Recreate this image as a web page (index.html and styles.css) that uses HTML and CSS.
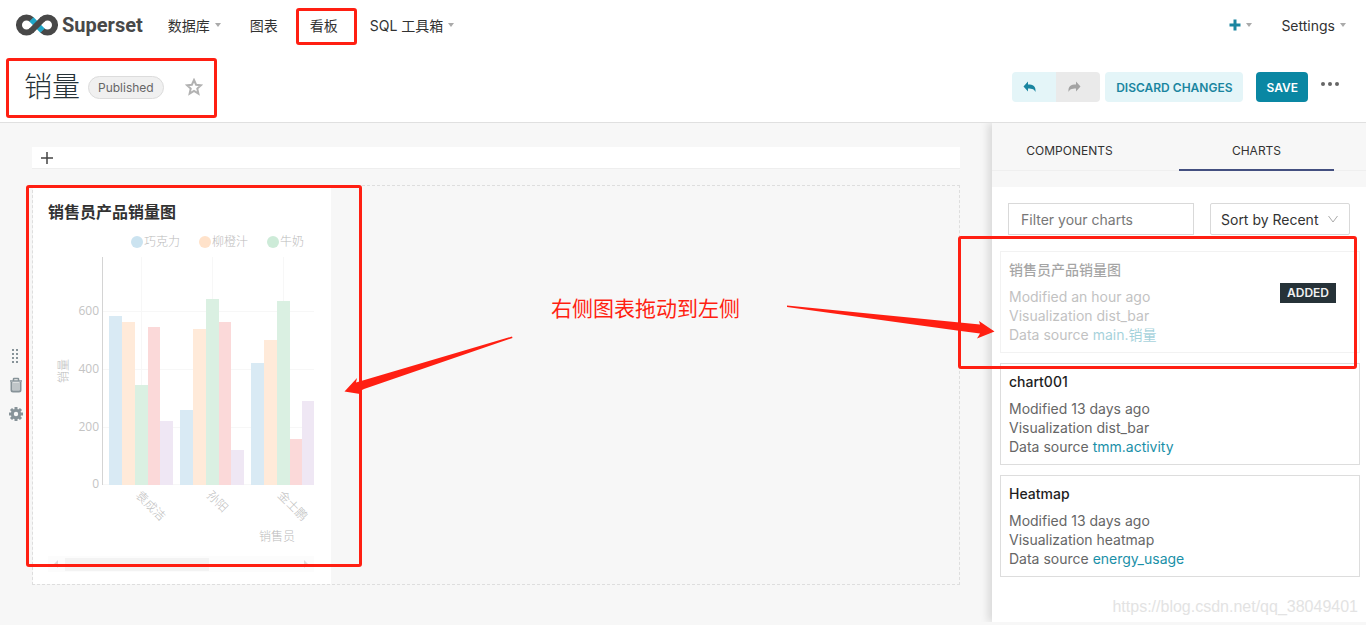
FILE: index.html
```
<!DOCTYPE html>
<html lang="zh">
  <head>
    <meta charset="utf-8">
    <meta name="viewport" content="width=device-width, initial-scale=1">
    <title>Superset</title>
    <link rel="stylesheet" href="styles.css">
  </head>
  <body>
    <nav class="navbar">
      <a class="brand" href="#">
        <svg width="42" height="22" viewBox="0 0 42 22" fill="none" stroke-width="6">
          <path d="M15.800 5.700a7.500 7.500 0 1 0 0 10.600M26.200 5.700a7.500 7.500 0 1 1 0 10.600" stroke="#484848"/>
          <path d="M15.500 5.400L26.500 16.600" stroke="#20a7c9"/>
          <path d="M15.200 16.800L26.800 5.200" stroke="#484848"/>
        </svg>
        <span>Superset</span>
      </a>
      <div class="menu">
        <a href="#">数据库<i class="caret"></i></a>
        <a href="#">图表</a>
        <a href="#">看板</a>
        <a href="#">SQL 工具箱<i class="caret"></i></a>
      </div>
      <div class="menu menu-right">
        <a href="#" aria-label="New">
          <svg width="12" height="12" viewBox="0 0 12 12"><path d="M6 0.500v11M0.500 6h11" stroke="#1a85a0" stroke-width="3"/></svg><i class="caret"></i>
        </a>
        <a href="#">Settings<i class="caret"></i></a>
      </div>
    </nav>

    <header class="dash-header">
      <h1>销量</h1>
      <span class="badge">Published</span>
      <button class="icon-btn" aria-label="Favorite">
        <svg width="18" height="18" viewBox="0 0 18 18"><path d="M9 2l2.100 4.700 5 .5-3.800 3.400 1.100 5L9 13l-4.400 2.600 1.100-5L1.900 7.200l5-.5z" fill="none" stroke="#b2b2b2" stroke-width="2"/></svg>
      </button>
      <div class="actions">
        <div class="btn-group">
          <button class="btn btn-light" aria-label="Undo">
            <svg width="14" height="12" viewBox="0 0 14 12"><path d="M5 0.500v3c5 0 8 1.500 7.500 7.500C11.500 8.500 9.500 7.500 5 7.500v3L0.500 5.500z" fill="#1a85a0"/></svg>
          </button>
          <button class="btn btn-disabled" aria-label="Redo" disabled>
            <svg width="14" height="12" viewBox="0 0 14 12"><path d="M9 0.500v3c-5 0-8 1.500-7.500 7.500C2.500 8.500 4.500 7.500 9 7.500v3l4.500-5z" fill="#a3a3a3"/></svg>
          </button>
        </div>
        <button class="btn btn-light">DISCARD CHANGES</button>
        <button class="btn btn-primary">SAVE</button>
        <button class="icon-btn more" aria-label="More">
          <svg width="18" height="4" viewBox="0 0 18 4" fill="#666"><circle cx="2" cy="2" r="2"/><circle cx="9" cy="2" r="2"/><circle cx="16" cy="2" r="2"/></svg>
        </button>
      </div>
    </header>

    <main class="content">
      <section class="dashboard">
        <div class="drop-bar">
          <button class="icon-btn" aria-label="Add tab">
            <svg width="12" height="12" viewBox="0 0 12 12"><path d="M6 0v12M0 6h12" stroke="#444" stroke-width="1.500"/></svg>
          </button>
        </div>
        <div class="row-wrap">
          <div class="row-tools">
            <button class="icon-btn" aria-label="Drag">
              <svg width="8" height="16" viewBox="0 0 8 16" fill="#879399"><path d="M0 1h2v2H0zM4 1h2v2H4zM0 5h2v2H0zM4 5h2v2H4zM0 9h2v2H0zM4 9h2v2H4zM0 13h2v2H0zM4 13h2v2H4z"/></svg>
            </button>
            <button class="icon-btn" aria-label="Delete">
              <svg width="14" height="16" viewBox="0 0 14 16" fill="none" stroke="#879399"><path d="M1 4h12M4.500 4V2q0-.5.500-.5h4q.5 0 .5.500v2" stroke-width="1.500"/><path d="M2.500 5v8q0 1.500 1.500 1.500h6q1.500 0 1.500-1.500V5" stroke-width="2"/><path d="M5 5.500v8M7 5.500v8M9 5.500v8"/></svg>
            </button>
            <button class="icon-btn" aria-label="Row settings">
              <svg width="16" height="16" viewBox="0 0 16 16" fill="none" stroke="#879399"><circle cx="8" cy="8" r="3.700" stroke-width="3"/><path d="M8 1v2.500M8 12.500V15M1 8h2.500M12.500 8H15M3 3l2 2M11 11l2 2M3 13l2-2M11 5l2-2" stroke-width="3"/></svg>
            </button>
          </div>
          <div class="row">
            <article class="chart">
              <h2>销售员产品销量图</h2>
              <svg class="plot" viewBox="0 0 266 344" role="img" aria-label="销售员产品销量图">
                <g class="grid">
                  <path d="M54 83.500h212M54 141.500h212M54 199.500h212M54 256.500h212M93.500 29v227M164.500 29v227M235.500 29v227"/>
                </g>
                <g fill="#d9eaf4"><rect x="61" y="88" width="13" height="169"/><rect x="132" y="182" width="13" height="75"/><rect x="203" y="135" width="13" height="122"/></g>
                <g fill="#ffead9"><rect x="74" y="94" width="13" height="163"/><rect x="145" y="101" width="13" height="156"/><rect x="216" y="112" width="13" height="145"/></g>
                <g fill="#daf0e2"><rect x="87" y="157" width="13" height="100"/><rect x="158" y="71" width="13" height="186"/><rect x="229" y="73" width="13" height="184"/></g>
                <g fill="#fbd9d9"><rect x="100" y="99" width="12" height="158"/><rect x="171" y="94" width="12" height="163"/><rect x="242" y="211" width="12" height="46"/></g>
                <g fill="#efe7f4"><rect x="112" y="193" width="13" height="64"/><rect x="183" y="222" width="13" height="35"/><rect x="254" y="173" width="12" height="84"/></g>
                <path d="M54.500 29v228" stroke="#d4d4d4"/>
                <circle cx="89" cy="14" r="6" fill="#cbe3f0"/>
                <circle cx="157" cy="14" r="6" fill="#ffe2ca"/>
                <circle cx="225" cy="14" r="6" fill="#cdebd8"/>
                <text x="96" y="18">巧克力</text>
                <text x="164" y="18">柳橙汁</text>
                <text x="232" y="18">牛奶</text>
                <g class="ticks">
                  <text x="51" y="87">600</text>
                  <text x="51" y="145">400</text>
                  <text x="51" y="203">200</text>
                  <text x="51" y="260">0</text>
                </g>
                <text transform="translate(20 155) rotate(-90)">销量</text>
                <text transform="translate(87 268) rotate(45)">袁成洁</text>
                <text transform="translate(158 268) rotate(45)">孙阳</text>
                <text transform="translate(229 268) rotate(45)">金士鹏</text>
                <text x="211" y="313">销售员</text>
                <rect x="0" y="328" width="266" height="16" fill="#fcfcfc"/>
                <rect x="17" y="330" width="144" height="13" fill="#f3f3f3"/>
                <path d="M10 332v8l-4-4zM256 332v8l4-4z" fill="#ddd"/>
              </svg>
            </article>
          </div>
        </div>
      </section>

      <aside class="builder">
        <div class="tabs-head">
          <div class="tabs" role="tablist">
            <button class="tab" role="tab">COMPONENTS</button>
            <button class="tab active" role="tab" aria-selected="true">CHARTS</button>
          </div>
        </div>
        <div class="filters">
          <input type="text" placeholder="Filter your charts" aria-label="Filter your charts">
          <div class="select">
            <select aria-label="Sort"><option>Sort by Recent</option></select>
            <svg width="10" height="8" viewBox="0 0 10 8"><path d="M0.500 1L5 7l4.500-6" fill="none" stroke="#aaa"/></svg>
          </div>
        </div>
        <div class="cards">
          <div class="card added">
            <div class="card-body">
              <h3>销售员产品销量图</h3>
              <p>Modified an hour ago</p>
              <p>Visualization dist_bar</p>
              <p>Data source <a href="#">main.销量</a></p>
            </div>
            <span class="added-tag">ADDED</span>
          </div>
          <div class="card">
            <div class="card-body">
              <h3>chart001</h3>
              <p>Modified 13 days ago</p>
              <p>Visualization dist_bar</p>
              <p>Data source <a href="#">tmm.activity</a></p>
            </div>
          </div>
          <div class="card">
            <div class="card-body">
              <h3>Heatmap</h3>
              <p>Modified 13 days ago</p>
              <p>Visualization heatmap</p>
              <p>Data source <a href="#">energy_usage</a></p>
            </div>
          </div>
        </div>
      </aside>
    </main>

    <!-- notes drawn over the page -->
    <svg class="notes" width="1366" height="625" viewBox="0 0 1366 625">
      <g fill="none" stroke="#ff1f12" stroke-width="3">
        <rect x="297.500" y="9.500" width="58" height="34" rx="1.500"/>
        <rect x="7.500" y="59.500" width="208" height="57" rx="1.500"/>
        <rect x="27.500" y="186.500" width="333" height="379" rx="1.500"/>
        <rect x="959.500" y="237.500" width="396" height="130" rx="1.500"/>
      </g>
      <g fill="#ff1f12">
        <path d="M512 336.500L356 382.500 357 378 344.500 391.500 360 394 359 391.500 364 389 512.500 338z"/>
        <path d="M787 305.500L980 324.500 979 321 994.500 331.500 977 338.500 980 333.500 957 330.500 787 307z"/>
        <text x="551" y="316">右侧图表拖动到左侧</text>
      </g>
    </svg>
    <div class="watermark">https://blog.csdn.net/qq_38049401</div>
  </body>
</html>
```
FILE: styles.css
```
*{
  box-sizing: border-box;
}
body{
  margin: 0;
  min-height: 100vh;
  display: flex;
  flex-direction: column;
  position: relative;
  background: #f7f7f7;
  color: #323232;
  font-family: Inter, "Noto Sans CJK SC", sans-serif;
  font-size: 14px;
  line-height: 19px;
}
h1, h2, h3, p{
  margin: 0;
}
a{
  color: #1a90a8;
  text-decoration: none;
}
button, input, select{
  font-family: inherit;
  font-size: 14px;
}
svg{
  display: block;
}
.icon-btn{
  padding: 0;
  border: none;
  background: none;
  cursor: pointer;
}
.navbar{
  display: flex;
  align-items: center;
  height: 52px;
  padding: 0 20px 2px 16px;
  background: #fff;
}
.brand{
  display: flex;
  align-items: center;
  gap: 4px;
  margin-right: 25px;
  color: #484848;
  font-family: Roboto, sans-serif;
  font-size: 20px;
  font-weight: bold;
}
.menu{
  display: flex;
  gap: 32px;
}
.menu a{
  display: flex;
  align-items: center;
  color: #323232;
}
.caret{
  margin: 0 -3px 0 5px;
  border: 3px solid transparent;
  border-top: 4px solid #aaa;
  border-bottom: none;
}
.menu-right{
  margin-left: auto;
  padding-right: 3px;
  gap: 32px;
}
.dash-header{
  display: flex;
  align-items: center;
  height: 71px;
  padding: 0 27px 0 24px;
  background: #fff;
  border-bottom: 1px solid #e0e0e0;
}
.dash-header h1{
  color: #263238;
  font-size: 28px;
  font-weight: 300;
  line-height: 36px;
}
.badge{
  margin: 0 21px 0 8px;
  padding: 1px 9px;
  border: 1px solid #dcdcdc;
  border-radius: 12px;
  background: #f0f0f0;
  color: #666;
  font-size: 12px;
}
.actions{
  display: flex;
  align-items: center;
  margin-left: auto;
}
.btn-group{
  display: flex;
  margin-right: 5px;
}
.btn{
  height: 30px;
  padding: 0 11px;
  border: none;
  border-radius: 4px;
  font-size: 12px;
  font-weight: 600;
  cursor: pointer;
}
.btn-light{
  background: #e4f5f8;
  color: #1a85a0;
}
.btn-disabled{
  background: #eaeaea;
}
.btn-primary{
  margin: 0 13px;
  padding: 0 10px;
  background: #0a87a3;
  color: #fff;
}
.btn-group .btn{
  width: 44px;
}
.btn-group .btn:first-child{
  border-radius: 4px 0 0 4px;
}
.btn-group .btn:last-child{
  border-radius: 0 4px 4px 0;
}
.more{
  margin-bottom: 6px;
}
.content{
  flex: 1;
  display: flex;
}
.dashboard{
  flex: 1;
  padding: 24px 32px 40px 0;
}
.drop-bar{
  display: flex;
  align-items: center;
  height: 22px;
  margin: 0 0 16px 32px;
  padding-left: 9px;
  background: #fff;
  border-bottom: 1px solid #eee;
}
.row-wrap{
  display: flex;
}
.row-tools{
  display: flex;
  flex-direction: column;
  align-items: center;
  justify-content: center;
  gap: 13px;
  width: 32px;
}
.row{
  flex: 1;
  display: flex;
  border: 1px dashed #dedede;
}
.chart{
  width: 298px;
  padding: 16px 17px 12px 15px;
  background: #fff;
}
.chart h2{
  margin-bottom: 6px;
  color: #323232;
  font-size: 16px;
  font-weight: 700;
  line-height: 20px;
}
.plot{
  width: 100%;
}
.plot text{
  fill: #bbb;
  font-size: 12px;
  font-weight: 300;
}
.plot .ticks text{
  text-anchor: end;
  fill: #c4c4c4;
  font-family: "Open Sans", sans-serif;
  font-weight: 400;
}
.grid{
  stroke: #f7f7f7;
}
.builder{
  width: 374px;
  margin-bottom: 3px;
  background: #fff;
  box-shadow: -4px 0 8px rgba(0, 0, 0, .12);
  clip-path: inset(0 0 0 -16px);
}
.tabs-head{
  padding-bottom: 16px;
  background: #f7f7f7;
}
.tabs{
  display: flex;
  gap: 32px;
  padding-right: 32px;
  border-bottom: 1px solid #efefef;
}
.tab{
  flex: 1;
  height: 48px;
  margin-bottom: -1px;
  padding: 8px 0 0;
  border: none;
  border-bottom: 2px solid transparent;
  background: none;
  color: #323232;
  font-size: 12px;
}
.tab.active{
  border-bottom-color: #434f80;
}
.filters{
  display: flex;
  gap: 16px;
  padding: 16px;
}
.filters input{
  flex: 1;
  min-width: 0;
  height: 32px;
  padding: 0 12px;
  border: 1px solid #d9d9d9;
}
.filters input::placeholder{
  color: #777;
}
.select{
  position: relative;
}
.select select{
  width: 140px;
  height: 32px;
  padding: 0 10px;
  appearance: none;
  border: 1px solid #d9d9d9;
  border-radius: 2px;
  background: #fff;
  color: #323232;
}
.select svg{
  position: absolute;
  right: 12px;
  top: 12px;
}
.cards{
  display: flex;
  flex-direction: column;
  gap: 10px;
  padding: 0 6px 0 8px;
}
.card{
  display: flex;
  justify-content: space-between;
  padding: 8px;
  border: 1px solid #ddd;
  color: #666;
}
.card-body{
  height: 84px;
}
.card h3{
  margin-bottom: 7px;
  color: #1e1e1e;
  font-size: 14px;
  font-weight: 500;
  line-height: 20px;
}
.card.added{
  border-color: #f2f2f2;
}
.added .card-body{
  opacity: .4;
}
.added-tag{
  align-self: center;
  margin: 0 15px 18px 0;
  padding: 0 7px;
  background: #263238;
  color: #f0f0f0;
  font-size: 12px;
  font-weight: 600;
  line-height: 20px;
}
.notes{
  position: absolute;
  left: 0;
  top: 0;
  pointer-events: none;
}
.notes text{
  font-size: 21px;
}
.watermark{
  position: absolute;
  right: 8px;
  bottom: 9px;
  color: #e3e3e3;
  font-family: "Liberation Sans", sans-serif;
  font-size: 16px;
}
```
